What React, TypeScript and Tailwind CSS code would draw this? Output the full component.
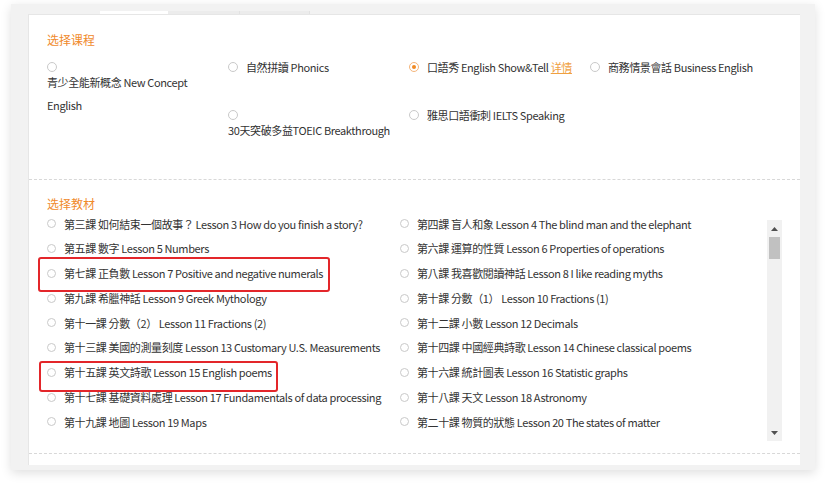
import React from "react";

const Radio = ({ checked = false, size = 10 }: { checked?: boolean; size?: number }) =>
  checked ? (
    <span
      className="inline-flex shrink-0 items-center justify-center rounded-full border border-[#f5b57a] bg-white"
      style={{ width: size, height: size }}
    >
      <span className="block h-[4px] w-[4px] rounded-full bg-[#f08a24]" />
    </span>
  ) : (
    <span
      className="inline-block shrink-0 rounded-full border border-[#c9c9c9] bg-white"
      style={{ width: size, height: size }}
    />
  );

const lessons: [string, string][] = [
  ["第三課 如何結束一個故事？ Lesson 3 How do you finish a story?", "第四課 盲人和象 Lesson 4 The blind man and the elephant"],
  ["第五課 數字 Lesson 5 Numbers", "第六課 運算的性質 Lesson 6 Properties of operations"],
  ["第七課 正負數 Lesson 7 Positive and negative numerals", "第八課 我喜歡閱讀神話 Lesson 8 I like reading myths"],
  ["第九課 希臘神話 Lesson 9 Greek Mythology", "第十課 分數（1） Lesson 10 Fractions (1)"],
  ["第十一課 分數（2） Lesson 11 Fractions (2)", "第十二課 小數 Lesson 12 Decimals"],
  ["第十三課 美國的測量刻度 Lesson 13 Customary U.S. Measurements", "第十四課 中國經典詩歌 Lesson 14 Chinese classical poems"],
  ["第十五課 英文詩歌 Lesson 15 English poems", "第十六課 統計圖表 Lesson 16 Statistic graphs"],
  ["第十七課 基礎資料處理 Lesson 17 Fundamentals of data processing", "第十八課 天文 Lesson 18 Astronomy"],
  ["第十九課 地圖 Lesson 19 Maps", "第二十課 物質的狀態 Lesson 20 The states of matter"],
];

export default function App() {
  return (
    <div className="relative h-[487px] w-[830px] overflow-hidden bg-white font-['Noto_Sans_CJK_TC','Noto_Sans',sans-serif] text-[11px] tracking-[-0.38px] text-[#333]">
      {/* outer frame */}
      <div className="ml-[11px] mt-[4px] flex h-[466px] w-[804px] flex-col bg-[#f2f2f2] shadow-[0_3px_10px_rgba(0,0,0,0.13)]">
        {/* tab strip */}
        <div className="flex h-[10px] items-end">
          <div className="w-[89px]" />
          <div className="h-[3px] w-[68px] bg-white" />
          <div className="h-[3px] w-[72px] border-r border-[#e2e2e2] bg-[#ececec]" />
          <div className="h-[3px] w-[70px] border-r border-[#e2e2e2] bg-[#ececec]" />
        </div>
        <div className="ml-[17px] flex h-[451px] w-[772px] flex-col border-l border-t border-[#e6e6e6] bg-white">
          {/* Section 1 */}
          <div className="h-[164px] pl-[18px] pt-[15px]">
            <div className="text-[12px] leading-[20px] tracking-normal text-[#f08a2c]">选择课程</div>
            <div className="mt-[5px] grid grid-cols-[181px_181px_181px_181px] grid-rows-[48px_48px]">
              <div className="row-span-2 flex flex-col">
                <div className="mt-[7px] flex h-[10px]"><Radio /></div>
                <div className="-mt-[1px] leading-[23px]">
                  青少全能新概念 New Concept
                  <br />
                  English
                </div>
              </div>
              <div className="flex h-[24px] items-center gap-[8px]">
                <Radio />
                <span>自然拼讀 Phonics</span>
              </div>
              <div className="flex h-[24px] items-center gap-[8px]">
                <Radio checked />
                <span>
                  口語秀 English Show&amp;Tell <span className="text-[#f0a040] underline">详情</span>
                </span>
              </div>
              <div className="flex h-[24px] items-center gap-[8px]">
                <Radio />
                <span>商務情景會話 Business English</span>
              </div>
              <div className="flex flex-col">
                <div className="mt-[7px] flex h-[10px]"><Radio /></div>
                <div className="-mt-[1px] leading-[23px]">30天突破多益TOEIC Breakthrough</div>
              </div>
              <div className="flex h-[24px] items-center gap-[8px]">
                <Radio />
                <span>雅思口語衝刺 IELTS Speaking</span>
              </div>
              <div />
            </div>
          </div>

          {/* Section 2 */}
          <div className="border-t border-dashed border-[#d8d8d8] pl-[18px] pr-[18px] pt-[14px]">
            <div className="text-[12px] leading-[20px] tracking-normal text-[#f08a2c]">选择教材</div>
            <div className="mt-[5px] flex h-[222px]">
              <div className="flex-1 overflow-hidden">
                <div className="-mt-[7.5px]">
                  {lessons.map(([a, b], i) => (
                    <div key={i} className="flex h-[24.75px] items-center">
                      <div className="flex w-[353px] items-center gap-[8px] whitespace-nowrap">
                        <Radio size={9} />
                        <span>{a}</span>
                      </div>
                      <div className="flex items-center gap-[8px] whitespace-nowrap">
                        <Radio size={9} />
                        <span>{b}</span>
                      </div>
                    </div>
                  ))}
                </div>
              </div>
              {/* scrollbar */}
              <div className="mt-[1px] flex w-[15px] flex-col bg-[#f1f1f1]">
                <div className="flex h-[17px] items-center justify-center">
                  <svg width="7" height="4" viewBox="0 0 7 4"><path d="M3.5 0L7 4H0z" fill="#505050" /></svg>
                </div>
                <div className="mx-[2px] h-[22px] bg-[#c1c1c1]" />
                <div className="flex-1" />
                <div className="flex h-[17px] items-center justify-center">
                  <svg width="7" height="4" viewBox="0 0 7 4"><path d="M0 0H7L3.5 4z" fill="#505050" /></svg>
                </div>
              </div>
            </div>
            <div className="-ml-[18px] -mr-[18px] mt-[12px] border-t border-dashed border-[#d8d8d8]" />
          </div>
        </div>
      </div>

      {/* annotation boxes */}
      <div className="absolute left-[38px] top-[257px] h-[35px] w-[292px] rounded-[3px] border-2 border-[#e3262a]" />
      <div className="absolute left-[39px] top-[361px] h-[31px] w-[239px] rounded-[3px] border-2 border-[#e3262a]" />
    </div>
  );
}
